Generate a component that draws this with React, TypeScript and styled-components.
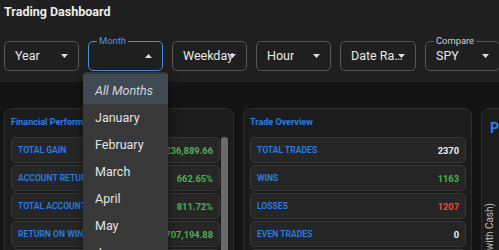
import React from 'react';
import styled, { createGlobalStyle } from 'styled-components';

const Global = createGlobalStyle`
  html, body { margin: 0; padding: 0; background: #141414; overflow: hidden; }
  body { font-family: Roboto, "Liberation Sans", Arial, sans-serif; }
  #root { width: 499px; height: 250px; overflow: hidden; }
`;

const Page = styled.div`
  width: 499px;
  height: 250px;
  overflow: hidden;
  background: #141414;
`;

const Header = styled.header`
  background: #1f1f1f;
  padding: 4px 0 11px 4px;
  display: flex;
  flex-direction: column;
  gap: 21px;
`;

const Title = styled.h1`
  margin: 0;
  font-size: 12.5px;
  line-height: 16px;
  font-weight: 700;
  color: #ececec;
`;

const Filters = styled.div`
  display: flex;
  gap: 9px;
`;

const SelectBox = styled.div<{ $active?: boolean }>`
  position: relative;
  flex: 0 0 75px;
  height: 30px;
  box-sizing: border-box;
  border: 1px solid ${(p) => (p.$active ? '#4a92e0' : '#595959')};
  border-radius: 5px;
  display: flex;
  align-items: center;
  padding: 0 10px;
`;

const SelectValue = styled.span`
  max-width: 54px;
  font-size: 12.5px;
  line-height: 16px;
  color: #e8e8e8;
  white-space: nowrap;
  overflow: hidden;
  text-overflow: ellipsis;
`;

const FloatLabel = styled.span<{ $active?: boolean }>`
  position: absolute;
  left: 8px;
  top: -7px;
  padding: 0 2px;
  background: #1f1f1f;
  font-size: 9.4px;
  line-height: 11px;
  color: ${(p) => (p.$active ? '#4a94e6' : '#d0d0d0')};
`;

const Caret = styled.svg<{ $up?: boolean }>`
  position: absolute;
  right: 10px;
  top: 50%;
  margin-top: -2px;
  width: 7px;
  height: 4px;
  transform: ${(p) => (p.$up ? 'rotate(180deg)' : 'none')};
`;

const Menu = styled.ul`
  position: absolute;
  left: -6px;
  top: 30px;
  width: 85px;
  margin: 0;
  padding: 2px 0 0;
  list-style: none;
  background: #383838;
  border-radius: 4px;
  box-shadow: 0 4px 10px rgba(0, 0, 0, 0.5);
  z-index: 10;
`;

const MenuItem = styled.li<{ $selected?: boolean }>`
  height: ${(p) => (p.$selected ? '30px' : '27px')};
  box-sizing: border-box;
  padding: ${(p) => (p.$selected ? '3px' : '0')} 0 0 12px;
  display: flex;
  align-items: center;
  font-size: 12.5px;
  color: ${(p) => (p.$selected ? '#d4d4d4' : '#e2e2e2')};
  font-style: ${(p) => (p.$selected ? 'italic' : 'normal')};
  background: ${(p) => (p.$selected ? '#3e4954' : 'transparent')};
`;

const Main = styled.main`
  display: flex;
  gap: 9px;
  padding: 26px 0 0 4px;
`;

const Panel = styled.section<{ $w: number }>`
  flex: 0 0 ${(p) => p.$w}px;
  box-sizing: border-box;
  height: 200px;
  background: #1c1c1c;
  border: 1px solid #2d2d2d;
  border-radius: 8px;
  padding: 7px 5px 0 6px;
  display: flex;
  flex-direction: column;
  gap: 9px;
`;

const PanelTitle = styled.h2`
  margin: 0;
  font-size: 9px;
  line-height: 12px;
  font-weight: 700;
  color: #2a7de6;
  white-space: nowrap;
  overflow: hidden;
`;

const ScrollArea = styled.div`
  display: flex;
  gap: 1px;
  align-items: flex-start;
`;

const ScrollThumb = styled.div`
  flex: 0 0 7px;
  height: 134px;
  background: #6a6a6a;
  border-radius: 3px;
`;

const RowList = styled.div`
  flex: 1;
  min-width: 0;
  display: flex;
  flex-direction: column;
  gap: 2px;
`;

const Row = styled.div`
  flex: 0 0 26px;
  height: 26px;
  box-sizing: border-box;
  background: #262626;
  border: 1px solid #383838;
  border-radius: 5px;
  display: flex;
  align-items: center;
  justify-content: space-between;
  padding: 0 6px;
  white-space: nowrap;
  overflow: hidden;
`;

const RowLabel = styled.span`
  font-size: 8.6px;
  font-weight: 600;
  color: #2a7de6;
  text-transform: uppercase;
`;

const RowValue = styled.span<{ $tone: 'green' | 'red' | 'white' }>`
  font-size: 9.3px;
  font-weight: 700;
  color: ${(p) => (p.$tone === 'green' ? '#4caf50' : p.$tone === 'red' ? '#f44336' : '#f0f0f0')};
`;

const BigPanel = styled.section`
  flex: 0 0 230px;
  box-sizing: border-box;
  height: 200px;
  background: #1c1c1c;
  border: 1px solid #2d2d2d;
  border-radius: 8px;
  padding-top: 10px;
  display: flex;
  flex-direction: column;
`;

const BigTitle = styled.h2`
  margin: 0;
  padding: 0 8px;
  font-size: 14px;
  line-height: 18px;
  font-weight: 700;
  color: #2a7de6;
  white-space: nowrap;
`;

const Chart = styled.svg`
  display: block;
  width: 220px;
  height: 150px;
`;

const CaretIcon = ({ up }: { up?: boolean }) => (
  <Caret $up={up} viewBox="0 0 7 4">
    <path d="M0 0 L7 0 L3.5 4 Z" fill="#e0e0e0" />
  </Caret>
);

const financial = [
  { label: 'Total Gain', value: '£36,889.66' },
  { label: 'Account Return', value: '662.65%' },
  { label: 'Total Account Return', value: '811.72%' },
  { label: 'Return on Winners', value: '£707,194.88' },
  { label: 'Return on Losers', value: '-£670,305.22' },
];

const trades: { label: string; value: string; tone: 'green' | 'red' | 'white' }[] = [
  { label: 'Total Trades', value: '2370', tone: 'white' },
  { label: 'Wins', value: '1163', tone: 'green' },
  { label: 'Losses', value: '1207', tone: 'red' },
  { label: 'Even Trades', value: '0', tone: 'white' },
  { label: 'Win Rate', value: '49.07%', tone: 'white' },
];

const months = ['All Months', 'January', 'February', 'March', 'April', 'May', 'June', 'July'];

export default function App() {
  return (
    <Page>
      <Global />
      <Header>
        <Title>Trading Dashboard</Title>
        <Filters>
          <SelectBox>
            <SelectValue>Year</SelectValue>
            <CaretIcon />
          </SelectBox>
          <SelectBox $active>
            <FloatLabel $active>Month</FloatLabel>
            <SelectValue />
            <CaretIcon up />
            <Menu>
              {months.map((m, i) => (
                <MenuItem key={m} $selected={i === 0}>
                  {m}
                </MenuItem>
              ))}
            </Menu>
          </SelectBox>
          <SelectBox>
            <SelectValue>Weekday</SelectValue>
            <CaretIcon />
          </SelectBox>
          <SelectBox>
            <SelectValue>Hour</SelectValue>
            <CaretIcon />
          </SelectBox>
          <SelectBox>
            <SelectValue>Date Range</SelectValue>
            <CaretIcon />
          </SelectBox>
          <SelectBox>
            <FloatLabel>Compare</FloatLabel>
            <SelectValue>SPY</SelectValue>
            <CaretIcon />
          </SelectBox>
        </Filters>
      </Header>
      <Main>
        <Panel $w={230}>
          <PanelTitle>Financial Performance</PanelTitle>
          <ScrollArea>
            <RowList>
              {financial.map((r) => (
                <Row key={r.label}>
                  <RowLabel>{r.label}</RowLabel>
                  <RowValue $tone={r.value.startsWith('-') ? 'red' : 'green'}>{r.value}</RowValue>
                </Row>
              ))}
            </RowList>
            <ScrollThumb />
          </ScrollArea>
        </Panel>
        <Panel $w={229}>
          <PanelTitle>Trade Overview</PanelTitle>
          <RowList>
            {trades.map((r) => (
              <Row key={r.label}>
                <RowLabel>{r.label}</RowLabel>
                <RowValue $tone={r.tone}>{r.value}</RowValue>
              </Row>
            ))}
          </RowList>
        </Panel>
        <BigPanel>
          <BigTitle>Portfolio Performance</BigTitle>
          <Chart viewBox="0 0 220 150">
            <text
              transform="translate(11,66) rotate(-90)"
              textAnchor="end"
              fontSize="10"
              fill="#bdbdbd"
              fontFamily="Roboto, Arial, sans-serif"
            >
              Portfolio Value (with Cash)
            </text>
          </Chart>
        </BigPanel>
      </Main>
    </Page>
  );
}
